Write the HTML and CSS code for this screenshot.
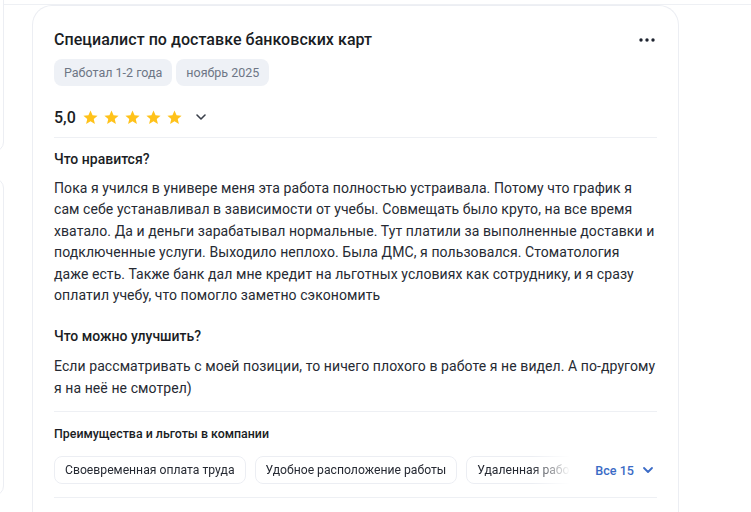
FILE: index.html
```html
<!DOCTYPE html>
<html lang="ru">
<head>
<meta charset="utf-8">
<link rel="stylesheet" href="styles.css">
</head>
<body>
<div class="topline"></div>
<div class="page">
  <div class="side">
    <div class="side-box side-box--a"></div>
    <div class="side-box side-box--b"></div>
  </div>
  <article class="card">
    <header class="head">
      <h2 class="title">Специалист по доставке банковских карт</h2>
      <button class="more" aria-label="Ещё">
        <svg width="16" height="4" viewBox="0 0 16 4"><circle cx="2" cy="2" r="1.7" fill="#1f2430"/><circle cx="8" cy="2" r="1.7" fill="#1f2430"/><circle cx="14" cy="2" r="1.7" fill="#1f2430"/></svg>
      </button>
    </header>
    <div class="tags">
      <span class="tag">Работал 1-2 года</span>
      <span class="tag">ноябрь 2025</span>
    </div>
    <div class="rating">
      <span class="score">5,0</span>
      <span class="stars">
        <svg class="star" viewBox="0 0 24 24"><path d="M12 2.2l2.9 6.6 7.1.6-5.4 4.7 1.6 7-6.2-3.7-6.2 3.7 1.6-7L2 9.4l7.1-.6z"/></svg>
        <svg class="star" viewBox="0 0 24 24"><path d="M12 2.2l2.9 6.6 7.1.6-5.4 4.7 1.6 7-6.2-3.7-6.2 3.7 1.6-7L2 9.4l7.1-.6z"/></svg>
        <svg class="star" viewBox="0 0 24 24"><path d="M12 2.2l2.9 6.6 7.1.6-5.4 4.7 1.6 7-6.2-3.7-6.2 3.7 1.6-7L2 9.4l7.1-.6z"/></svg>
        <svg class="star" viewBox="0 0 24 24"><path d="M12 2.2l2.9 6.6 7.1.6-5.4 4.7 1.6 7-6.2-3.7-6.2 3.7 1.6-7L2 9.4l7.1-.6z"/></svg>
        <svg class="star" viewBox="0 0 24 24"><path d="M12 2.2l2.9 6.6 7.1.6-5.4 4.7 1.6 7-6.2-3.7-6.2 3.7 1.6-7L2 9.4l7.1-.6z"/></svg>
      </span>
      <svg class="chev" width="12" height="8" viewBox="0 0 12 8"><path d="M2 2l4 4 4-4" fill="none" stroke="#3a3f4a" stroke-width="1.6" stroke-linecap="round" stroke-linejoin="round"/></svg>
    </div>
    <section class="block">
      <h3 class="block-title">Что нравится?</h3>
      <p class="text">Пока я учился в универе меня эта работа полностью устраивала. Потому что график я сам себе устанавливал в зависимости от учебы. Совмещать было круто, на все время хватало. Да и деньги зарабатывал нормальные. Тут платили за выполненные доставки и подключенные услуги. Выходило неплохо. Была ДМС, я пользовался. Стоматология даже есть. Также банк дал мне кредит на льготных условиях как сотруднику, и я сразу оплатил учебу, что помогло заметно сэкономить</p>
      <h3 class="block-title block-title--second">Что можно улучшить?</h3>
      <p class="text text--second">Если рассматривать с моей позиции, то ничего плохого в работе я не видел. А по-другому я на неё не смотрел)</p>
    </section>
    <section class="benefits">
      <h4 class="benefits-title">Преимущества и льготы в компании</h4>
      <div class="benefits-row">
        <div class="chips">
          <span class="chip">Своевременная оплата труда</span>
          <span class="chip">Удобное расположение работы</span>
          <span class="chip">Удаленная работа</span>
          <span class="chip">ДМС</span>
        </div>
        <button class="all">Все 15
          <svg width="12" height="8" viewBox="0 0 12 8"><path d="M2 2l4 4 4-4" fill="none" stroke="#3b6bc6" stroke-width="1.8" stroke-linecap="round" stroke-linejoin="round"/></svg>
        </button>
      </div>
    </section>
  </article>
</div>
</body>
</html>
```
FILE: styles.css
```css
* { box-sizing: border-box; }
html, body { margin: 0; padding: 0; }
body {
  background: #fff;
  font-family: Roboto, "Noto Sans", Arial, sans-serif;
  color: #1f2430;
  width: 751px;
  height: 512px;
  overflow: hidden;
}
.topline {
  height: 5px;
  border-bottom: 1px solid #eef0f4;
}
.page {
  display: flex;
  align-items: flex-start;
}
.side {
  width: 20px;
  margin-left: -16px;
  display: flex;
  flex-direction: column;
  gap: 26px;
  margin-top: -20px;
}
.side-box {
  border: 1px solid #eceef3;
  border-radius: 14px;
  background: #fff;
}
.side-box--a { height: 167px; }
.side-box--b { height: 318px; }
.card {
  margin-left: 28px;
  width: 647px;
  height: 540px;
  border: 1px solid #eceef3;
  border-bottom: none;
  border-radius: 20px 20px 0 0;
  background: #fff;
  padding: 21px 21px 0 21px;
}
.head {
  display: flex;
  justify-content: space-between;
  align-items: center;
  height: 26px;
}
.title {
  margin: 0;
  font-size: 16px;
  font-weight: 500;
  line-height: 26px;
  color: #1a1d24;
  letter-spacing: 0.05px;
}
.more {
  border: 0;
  background: none;
  padding: 0;
  margin-right: 2px;
  display: flex;
}
.tags {
  display: flex;
  gap: 4px;
  margin-top: 6px;
}
.tag {
  background: #eef1f6;
  color: #6d7685;
  font-size: 12.5px;
  line-height: 27px;
  padding: 0 10px;
  border-radius: 8px;
}
.rating {
  display: flex;
  align-items: center;
  margin-top: 11px;
  height: 41px;
  border-bottom: 1px solid #eef0f4;
}
.score {
  font-size: 16px;
  font-weight: 500;
  color: #1a1d24;
  margin-right: 6px;
}
.stars { display: flex; gap: 4px; }
.star { width: 17px; height: 17px; fill: #ffc21a; }
.chev { margin-left: 12px; }
.block { padding-top: 11px; }
.block-title {
  margin: 0;
  font-size: 14px;
  font-weight: 500;
  line-height: 20px;
  color: #1a1d24;
}
.block-title--second { margin-top: 20px; }
.text {
  margin: 9px 0 0;
  font-size: 14px;
  line-height: 21.4px;
  letter-spacing: 0.08px;
  color: #262a33;
}
.text--second { margin-top: 10px; }
.benefits {
  border-top: 1px solid #eef0f4;
  margin-top: 12px;
  padding-top: 13px;
  border-bottom: 1px solid #eef0f4;
  padding-bottom: 13px;
}
.benefits-title {
  margin: 0;
  font-size: 12.4px;
  font-weight: 500;
  line-height: 18px;
  color: #1a1d24;
}
.benefits-row {
  display: flex;
  align-items: center;
  margin-top: 13px;
}
.chips {
  flex: 1;
  min-width: 0;
  display: flex;
  gap: 9px;
  overflow: hidden;
  -webkit-mask-image: linear-gradient(to right, #000 478px, transparent 516px);
  mask-image: linear-gradient(to right, #000 478px, transparent 516px);
}
.chip {
  flex: none;
  border: 1px solid #eceef3;
  border-radius: 8px;
  font-size: 12.2px;
  line-height: 26px;
  padding: 0 10px;
  color: #262a33;
}
.all {
  flex: none;
  margin-left: 12px;
  margin-right: 3px;
  border: 0;
  background: none;
  padding: 0;
  display: flex;
  align-items: center;
  gap: 8px;
  font-family: inherit;
  font-size: 12.6px;
  font-weight: 500;
  color: #3b6bc6;
}
```
